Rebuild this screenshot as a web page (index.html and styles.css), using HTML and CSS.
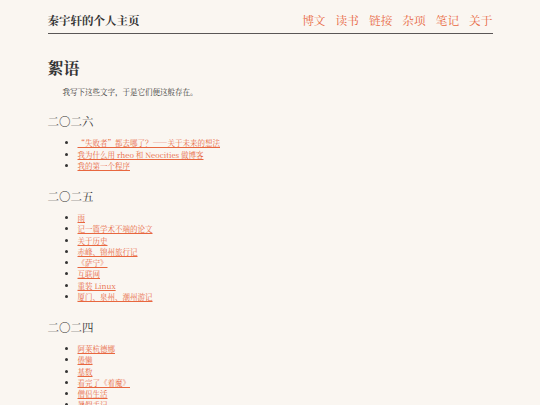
FILE: index.html
```html
<!DOCTYPE html>
<html lang="zh-CN">
<head>
<meta charset="utf-8">
<title>絮语</title>
<link rel="stylesheet" href="styles.css">
</head>
<body>
<div class="page">
  <header class="site-header">
    <a class="site-title" href="#">秦宇轩的个人主页</a>
    <nav class="nav">
      <a href="#">博文</a>
      <a href="#">读书</a>
      <a href="#">链接</a>
      <a href="#">杂项</a>
      <a href="#">笔记</a>
      <a href="#">关于</a>
    </nav>
  </header>
  <main class="content">
    <h1 class="page-title">絮语</h1>
    <p class="intro">我写下这些文字，于是它们便这般存在。</p>

    <section class="year">
      <h2 class="year-title">二〇二六</h2>
      <ul class="posts">
        <li><a href="#">“失败者”都去哪了？——关于未来的想法</a></li>
        <li><a href="#">我为什么用 rheo 和 Neocities 做博客</a></li>
        <li><a href="#">我的第一个程序</a></li>
      </ul>
    </section>

    <section class="year">
      <h2 class="year-title">二〇二五</h2>
      <ul class="posts">
        <li><a href="#">雨</a></li>
        <li><a href="#">记一篇学术不端的论文</a></li>
        <li><a href="#">关于历史</a></li>
        <li><a href="#">赤峰、锦州旅行记</a></li>
        <li><a href="#">《萨宁》</a></li>
        <li><a href="#">互联网</a></li>
        <li><a href="#">重装 Linux</a></li>
        <li><a href="#">厦门、泉州、潮州游记</a></li>
      </ul>
    </section>

    <section class="year">
      <h2 class="year-title">二〇二四</h2>
      <ul class="posts">
        <li><a href="#">阿莱杭德娜</a></li>
        <li><a href="#">倦懒</a></li>
        <li><a href="#">基数</a></li>
        <li><a href="#">看完了《着魔》</a></li>
        <li><a href="#">僧侣生活</a></li>
        <li><a href="#">暑假手记</a></li>
      </ul>
    </section>
  </main>
</div>
</body>
</html>
```
FILE: styles.css
```css
html, body {
  margin: 0;
  padding: 0;
  background: #faf6f1;
}

body {
  color: #333333;
  font-family: "Noto Serif CJK SC", "Liberation Serif", "Noto Sans CJK SC", serif;
}

.page {
  max-width: 445px;
  margin: 0 auto;
}

.site-header {
  display: flex;
  justify-content: space-between;
  align-items: baseline;
  padding: 12px 0 5px;
  border-bottom: 1px solid #5a5656;
}

.site-title {
  font-size: 11.5px;
  line-height: 16px;
  font-weight: bold;
  color: #333333;
  text-decoration: none;
}

.nav {
  display: flex;
  gap: 10px;
}

.nav a {
  font-size: 11.7px;
  line-height: 16px;
  color: #e8673f;
  text-decoration: none;
}

.content {
  padding-top: 24px;
}

.page-title {
  font-size: 16px;
  line-height: 20px;
  font-weight: bold;
  margin: 0 0 8px;
}

.intro {
  font-size: 7.5px;
  line-height: 11.25px;
  text-indent: 2em;
  margin: 0;
}

.year {
  margin-top: 17px;
}

.year + .year {
  margin-top: 18px;
}

.year-title {
  font-size: 11.5px;
  line-height: 15px;
  font-weight: normal;
  margin: 0 0 8px;
}

.posts {
  margin: 0;
  padding-left: 30px;
  font-size: 7.5px;
  line-height: 11.25px;
}

.posts a {
  color: #e8673f;
  text-decoration: underline;
}
```
